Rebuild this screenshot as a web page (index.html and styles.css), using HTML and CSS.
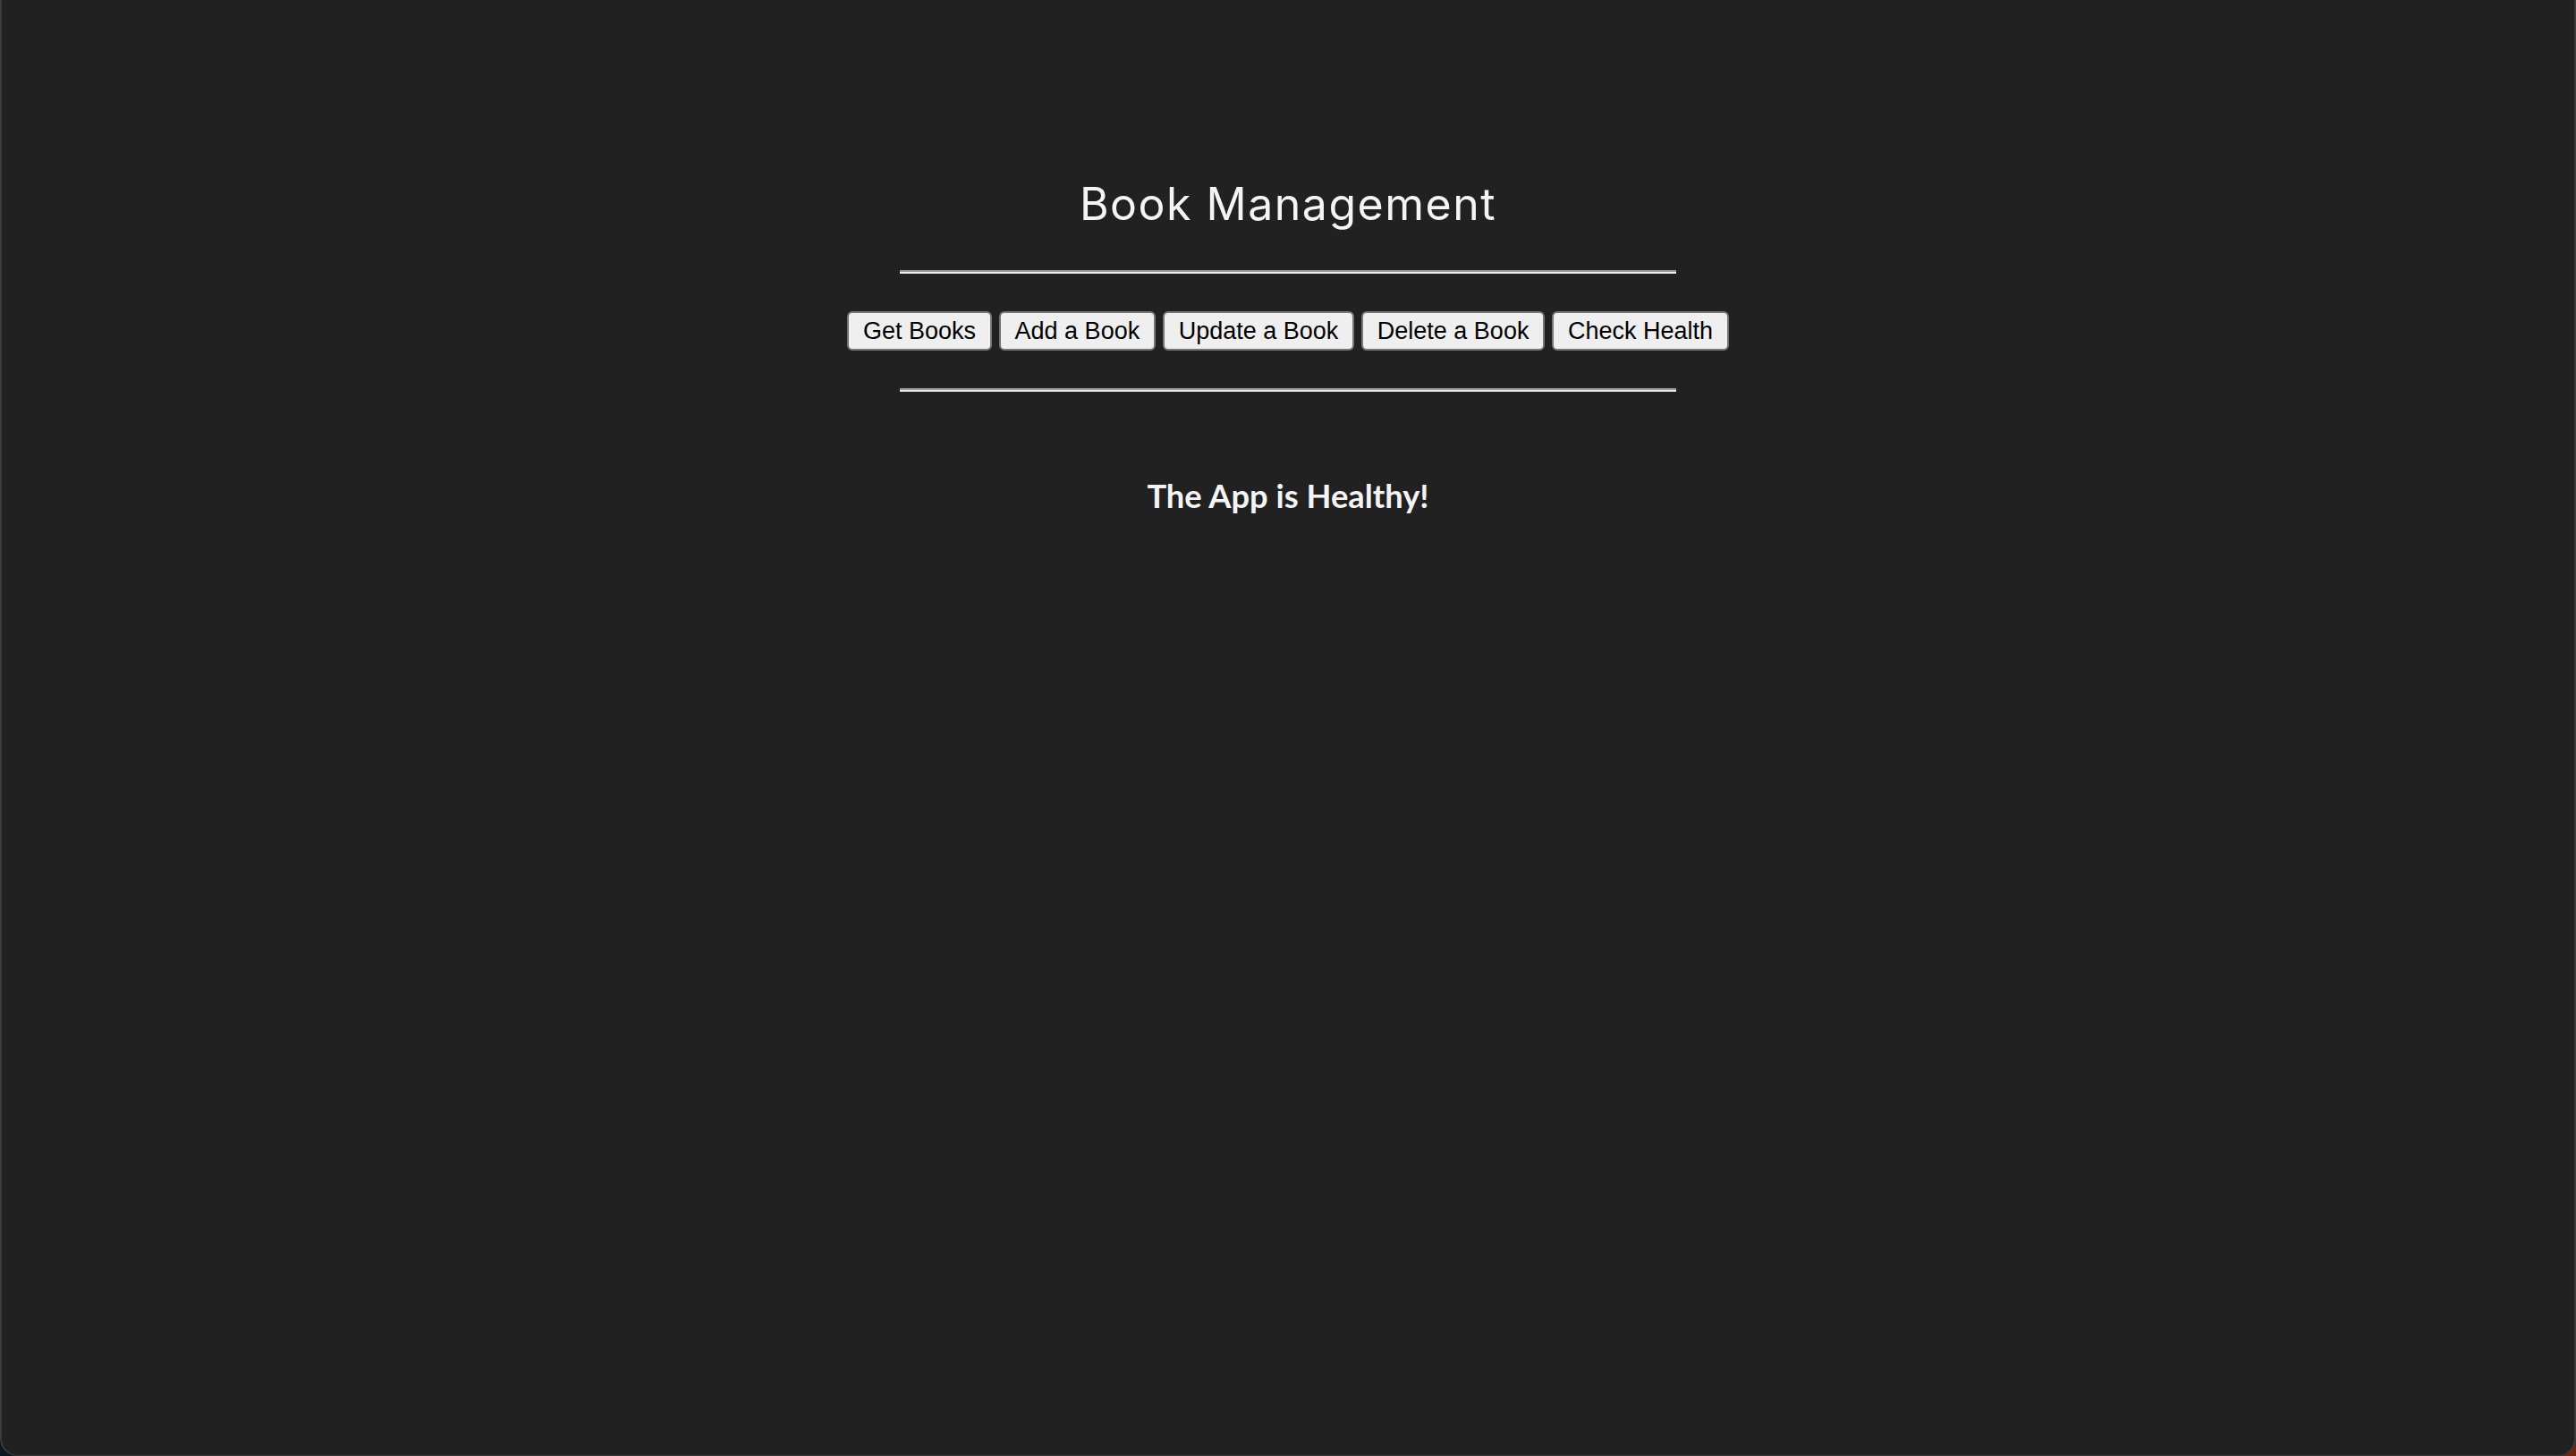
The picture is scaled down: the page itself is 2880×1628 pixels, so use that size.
FILE: index.html
```html
<!DOCTYPE html>
<html lang="en">
<head>
<meta charset="utf-8">
<title>Book Management</title>
<link rel="stylesheet" href="styles.css">
</head>
<body>
<div class="window">
  <main class="app">
    <h1 class="title">Book Management</h1>
    <hr class="rule">
    <div class="actions">
      <button class="btn">Get Books</button>
      <button class="btn">Add a Book</button>
      <button class="btn">Update a Book</button>
      <button class="btn">Delete a Book</button>
      <button class="btn">Check Health</button>
    </div>
    <hr class="rule">
    <h3 class="status">The App is Healthy!</h3>
  </main>
</div>
</body>
</html>
```
FILE: styles.css
```css
html, body {
  margin: 0;
  padding: 0;
  height: 100%;
}
body {
  background: linear-gradient(90deg, #0c1826 0%, #2a1a1c 50%, #6e2512 100%);
  overflow: hidden;
}
.window {
  box-sizing: border-box;
  height: 1628px;
  width: 2880px;
  background: #212121;
  border-left: 2px solid #3a3a3a;
  border-right: 2px solid #3a3a3a;
  border-bottom: 1px solid #3a3a3a;
  border-radius: 0 0 20px 20px;
}
.app {
  display: flex;
  flex-direction: column;
  align-items: center;
  padding-top: 198px;
}
.title {
  margin: 0;
  font-family: Inter, "Open Sans", sans-serif;
  font-weight: 400;
  font-size: 50px;
  line-height: 60px;
  letter-spacing: 1.5px;
  color: #f4f4f4;
}
.rule {
  box-sizing: border-box;
  width: 868px;
  height: 4px;
  margin: 44px 0 0;
  border: none;
  border-top: 2px solid #9a9a9a;
  border-bottom: 2px solid #eeeeee;
}
.actions {
  display: flex;
  gap: 7.5px;
  margin: 42px 0 42px;
}
.rule + .actions + .rule {
  margin-top: 0;
}
.btn {
  box-sizing: border-box;
  height: 44px;
  padding: 0 16px;
  font-family: "Liberation Sans", Arial, sans-serif;
  font-size: 27px;
  line-height: 40px;
  color: #000;
  background: #efefef;
  border: 2px solid #767676;
  border-radius: 6px;
}
.status {
  margin: 94px 0 0;
  font-family: Lato, sans-serif;
  font-weight: 700;
  font-size: 36.3px;
  line-height: 45px;
  color: #f4f4f4;
}
```
